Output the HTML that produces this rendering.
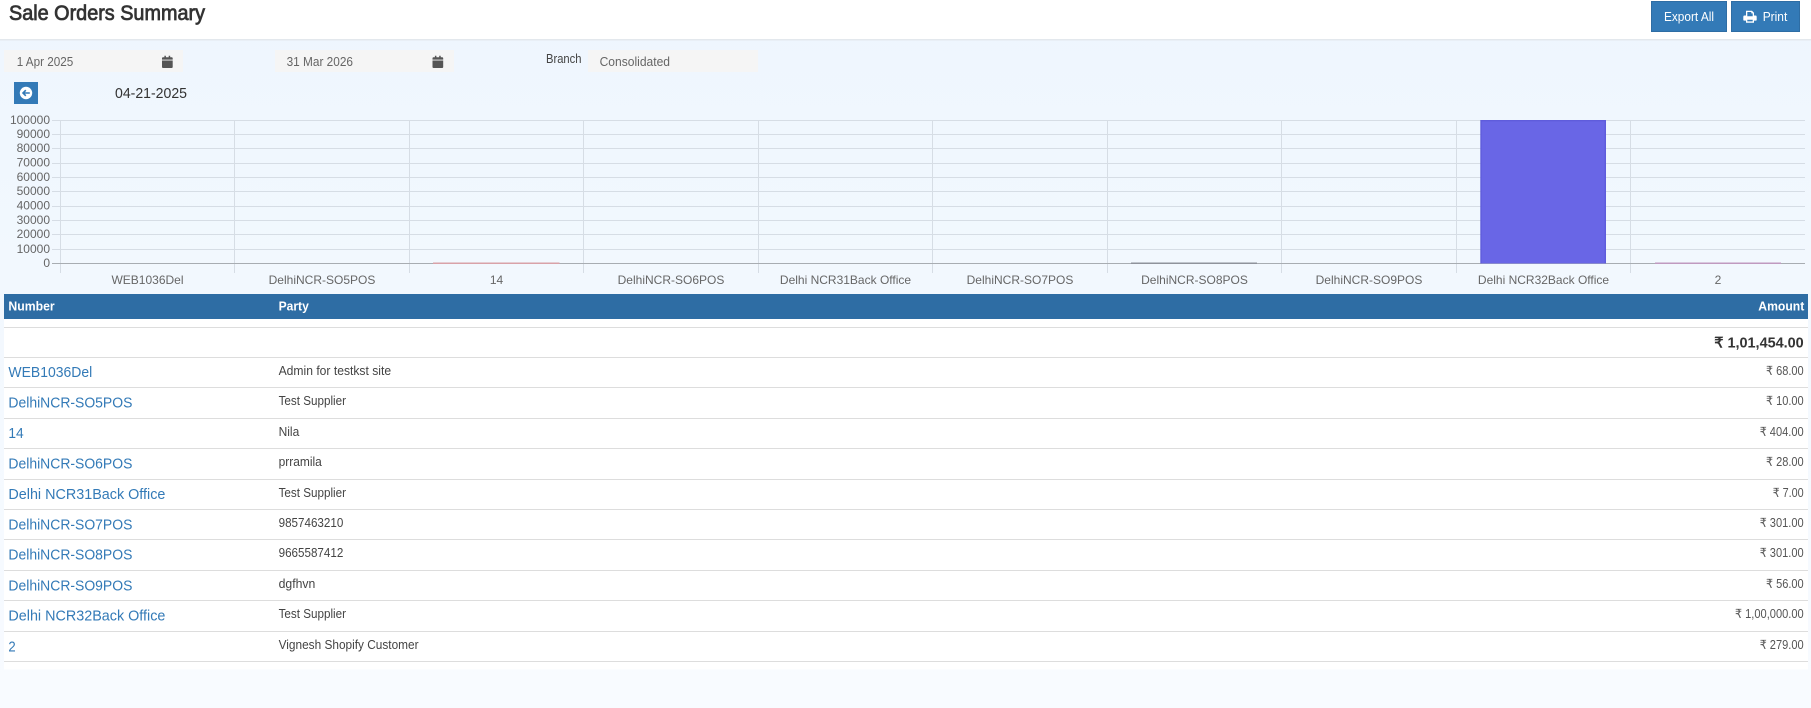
<!DOCTYPE html>
<html lang="en"><head><meta charset="utf-8"><title>Sale Orders Summary</title>
<style>
html,body{margin:0;padding:0;width:1811px;height:708px;overflow:hidden;background:#fff}
svg{display:block;position:absolute;left:0;top:0}
text{font-family:"Liberation Sans",Arial,sans-serif;white-space:pre}
.y{font-size:12px;fill:#666;text-anchor:end}
.x{font-size:12px;fill:#666;text-anchor:middle}
.l{font-size:15px;fill:#337ab7;transform:translateY(-.5px)}
.p{font-size:12.5px;fill:#444}
.a{font-size:12.5px;fill:#555}
.h{font-size:12.5px;fill:#fff;font-weight:bold}
.i{font-size:12.5px;fill:#666}
.b{font-size:12.5px;fill:#fff}
</style></head><body>
<svg width="1811" height="708" viewBox="0 0 1811 708" xmlns="http://www.w3.org/2000/svg">
<defs><linearGradient id="bg" x1="0" y1="0" x2="0" y2="1"><stop offset="0" stop-color="#eef6fe"/><stop offset="1" stop-color="#f8fbff"/></linearGradient></defs>
<rect x="0" y="0" width="1811" height="708" fill="url(#bg)"/>
<rect x="0" y="0" width="1811" height="39" fill="#fff"/>
<rect x="0" y="39" width="1811" height="1.5" fill="#e3e8ed"/>
<text x="9" y="20" font-size="21" fill="#333" stroke="#333" stroke-width=".75" textLength="196" lengthAdjust="spacingAndGlyphs">Sale Orders Summary</text>

<rect x="1651.5" y="1.5" width="75" height="30" fill="#337ab7" stroke="#2e6da4"/>
<text class="b" x="1664" y="21" textLength="50" lengthAdjust="spacingAndGlyphs">Export All</text>
<rect x="1731.5" y="1.5" width="68" height="30" fill="#337ab7" stroke="#2e6da4"/>
<path fill="#fff" fill-rule="evenodd" d="M1746 10.7h6l2 2v2.8h1.5a1.2 1.2 0 0 1 1.2 1.2v3.2a.7.7 0 0 1-.7.7h-2v2.1h-8v-2.1h-2a.7.7 0 0 1-.7-.7v-3.2a1.2 1.2 0 0 1 1.2-1.2h1.5zM1747.3 12v4.2h5.4v-2.8h-1.4V12zM1747.3 19.7v1.7h5.4v-1.7z"/>
<text class="b" x="1762.7" y="21" textLength="24.6" lengthAdjust="spacingAndGlyphs">Print</text>

<rect x="4" y="50" width="179" height="22" fill="#f5f5f5"/>
<text class="i" x="16.7" y="66" textLength="56.6" lengthAdjust="spacingAndGlyphs">1 Apr 2025</text>
<path fill="#555" d="M162 60.5h10.7v6.5a1 1 0 0 1-1 1H163a1 1 0 0 1-1-1zM163 57.2h1.4v-1.5h1.5v1.5h2.8v-1.5h1.5v1.5h1.5a1 1 0 0 1 1 1v1.4H162v-1.4a1 1 0 0 1 1-1z"/>
<rect x="275" y="50" width="179" height="22" fill="#f5f5f5"/>
<text class="i" x="286.6" y="66" textLength="66.4" lengthAdjust="spacingAndGlyphs">31 Mar 2026</text>
<path fill="#555" d="M432.5 60.5h10.7v6.5a1 1 0 0 1-1 1h-8.7a1 1 0 0 1-1-1zM433.5 57.2h1.4v-1.5h1.5v1.5h2.8v-1.5h1.5v1.5h1.5a1 1 0 0 1 1 1v1.4h-10.7v-1.4a1 1 0 0 1 1-1z"/>
<text class="p" x="546" y="63" textLength="35.5" lengthAdjust="spacingAndGlyphs">Branch</text>
<rect x="588" y="50" width="170" height="22" fill="#f5f5f5"/>
<text class="i" x="599.6" y="66" textLength="70.4" lengthAdjust="spacingAndGlyphs">Consolidated</text>

<rect x="14" y="82" width="24" height="22" fill="#337ab7"/>
<circle cx="26" cy="93" r="6.2" fill="#fff"/>
<path d="M29.8 93h-6.6M25.8 90.2L23 93l2.8 2.8" fill="none" stroke="#337ab7" stroke-width="1.6"/>
<text x="115" y="98" font-size="15" fill="#333" textLength="72" lengthAdjust="spacingAndGlyphs">04-21-2025</text>

<g stroke="#d6dde5" stroke-width="1" fill="none" shape-rendering="crispEdges">
<path d="M52 120.5H1805M52 134.5H1805M52 148.5H1805M52 163.5H1805M52 177.5H1805M52 191.5H1805M52 206.5H1805M52 220.5H1805M52 234.5H1805M52 249.5H1805"/>
<path d="M60.5 120V273M234.5 120V273M409.5 120V273M583.5 120V273M758.5 120V273M932.5 120V273M1107.5 120V273M1281.5 120V273M1456.5 120V273M1630.5 120V273"/>
</g>
<rect x="52" y="263" width="1753" height="1" fill="#a8adb2"/>
<rect x="433" y="262.5" width="126.5" height="1.5" fill="#d9a2a8"/>
<rect x="1131" y="262.5" width="126" height="1.5" fill="#8f939b"/>
<rect x="1655" y="262.5" width="126" height="1.5" fill="#c09ac0"/>
<rect x="1480.5" y="120" width="125.5" height="143.5" fill="#6966e6"/>
<path d="M1481 263.5V120.7H1605.3V263.5" fill="none" stroke="#5f5cdc" stroke-width="1.4"/>

<text class="y" x="50" y="124">100000</text>
<text class="y" x="50" y="138">90000</text>
<text class="y" x="50" y="152">80000</text>
<text class="y" x="50" y="166.5">70000</text>
<text class="y" x="50" y="181">60000</text>
<text class="y" x="50" y="195">50000</text>
<text class="y" x="50" y="209.5">40000</text>
<text class="y" x="50" y="224">30000</text>
<text class="y" x="50" y="238">20000</text>
<text class="y" x="50" y="253">10000</text>
<text class="y" x="50" y="267">0</text>

<text class="x" x="147.5" y="284">WEB1036Del</text>
<text class="x" x="322" y="284">DelhiNCR-SO5POS</text>
<text class="x" x="496.5" y="284">14</text>
<text class="x" x="671" y="284">DelhiNCR-SO6POS</text>
<text class="x" x="845.5" y="284">Delhi NCR31Back Office</text>
<text class="x" x="1020" y="284">DelhiNCR-SO7POS</text>
<text class="x" x="1194.5" y="284">DelhiNCR-SO8POS</text>
<text class="x" x="1369" y="284">DelhiNCR-SO9POS</text>
<text class="x" x="1543.5" y="284">Delhi NCR32Back Office</text>
<text class="x" x="1718" y="284">2</text>

<rect x="4" y="294" width="1804" height="25" fill="#2e6da4"/>
<text class="h" x="8.4" y="310.5" textLength="46.3" lengthAdjust="spacingAndGlyphs">Number</text>
<text class="h" x="278.6" y="310.5" textLength="30.2" lengthAdjust="spacingAndGlyphs">Party</text>
<text class="h" x="1758.3" y="310.5" textLength="46" lengthAdjust="spacingAndGlyphs">Amount</text>

<rect x="4" y="319" width="1804" height="350.5" fill="#fff"/>
<g fill="#ddd" shape-rendering="crispEdges">
<rect x="4" y="327" width="1804" height="1"/><rect x="4" y="357" width="1804" height="1"/><rect x="4" y="387" width="1804" height="1"/><rect x="4" y="418" width="1804" height="1"/><rect x="4" y="448" width="1804" height="1"/><rect x="4" y="479" width="1804" height="1"/><rect x="4" y="509" width="1804" height="1"/><rect x="4" y="539" width="1804" height="1"/><rect x="4" y="570" width="1804" height="1"/><rect x="4" y="600" width="1804" height="1"/><rect x="4" y="631" width="1804" height="1"/><rect x="4" y="661" width="1804" height="1"/>
</g>
<text x="1714.3" y="347.5" font-size="14.5" font-weight="bold" fill="#333" textLength="89.4" lengthAdjust="spacingAndGlyphs">₹ 1,01,454.00</text>

<text class="l" x="8.4" y="377.5" textLength="83.8" lengthAdjust="spacingAndGlyphs">WEB1036Del</text>
<text class="p" x="278.6" y="375" textLength="112.5" lengthAdjust="spacingAndGlyphs">Admin for testkst site</text>
<text class="a" x="1766" y="375" textLength="37.7" lengthAdjust="spacingAndGlyphs">₹ 68.00</text>

<text class="l" x="8.4" y="408" textLength="124" lengthAdjust="spacingAndGlyphs">DelhiNCR-SO5POS</text>
<text class="p" x="278.6" y="405" textLength="67.4" lengthAdjust="spacingAndGlyphs">Test Supplier</text>
<text class="a" x="1766" y="405" textLength="37.7" lengthAdjust="spacingAndGlyphs">₹ 10.00</text>

<text class="l" x="8.4" y="438.5" textLength="15.3" lengthAdjust="spacingAndGlyphs">14</text>
<text class="p" x="278.6" y="436" textLength="20.7" lengthAdjust="spacingAndGlyphs">Nila</text>
<text class="a" x="1759.7" y="436" textLength="44" lengthAdjust="spacingAndGlyphs">₹ 404.00</text>

<text class="l" x="8.4" y="469" textLength="124" lengthAdjust="spacingAndGlyphs">DelhiNCR-SO6POS</text>
<text class="p" x="278.6" y="466" textLength="43.2" lengthAdjust="spacingAndGlyphs">prramila</text>
<text class="a" x="1766" y="466" textLength="37.7" lengthAdjust="spacingAndGlyphs">₹ 28.00</text>

<text class="l" x="8.4" y="499.5" textLength="157" lengthAdjust="spacingAndGlyphs">Delhi NCR31Back Office</text>
<text class="p" x="278.6" y="497" textLength="67.4" lengthAdjust="spacingAndGlyphs">Test Supplier</text>
<text class="a" x="1772.7" y="497" textLength="31" lengthAdjust="spacingAndGlyphs">₹ 7.00</text>

<text class="l" x="8.4" y="530" textLength="124" lengthAdjust="spacingAndGlyphs">DelhiNCR-SO7POS</text>
<text class="p" x="278.6" y="527" textLength="64.7" lengthAdjust="spacingAndGlyphs">9857463210</text>
<text class="a" x="1759.7" y="527" textLength="44" lengthAdjust="spacingAndGlyphs">₹ 301.00</text>

<text class="l" x="8.4" y="560" textLength="124" lengthAdjust="spacingAndGlyphs">DelhiNCR-SO8POS</text>
<text class="p" x="278.6" y="557" textLength="64.7" lengthAdjust="spacingAndGlyphs">9665587412</text>
<text class="a" x="1759.7" y="557" textLength="44" lengthAdjust="spacingAndGlyphs">₹ 301.00</text>

<text class="l" x="8.4" y="591" textLength="124" lengthAdjust="spacingAndGlyphs">DelhiNCR-SO9POS</text>
<text class="p" x="278.6" y="588" textLength="36.7" lengthAdjust="spacingAndGlyphs">dgfhvn</text>
<text class="a" x="1766" y="588" textLength="37.7" lengthAdjust="spacingAndGlyphs">₹ 56.00</text>

<text class="l" x="8.4" y="621" textLength="157" lengthAdjust="spacingAndGlyphs">Delhi NCR32Back Office</text>
<text class="p" x="278.6" y="618" textLength="67.4" lengthAdjust="spacingAndGlyphs">Test Supplier</text>
<text class="a" x="1735" y="618" textLength="68.7" lengthAdjust="spacingAndGlyphs">₹ 1,00,000.00</text>

<text class="l" x="8.4" y="652" textLength="7.3" lengthAdjust="spacingAndGlyphs">2</text>
<text class="p" x="278.6" y="649" textLength="140" lengthAdjust="spacingAndGlyphs">Vignesh Shopify Customer</text>
<text class="a" x="1759.7" y="649" textLength="44" lengthAdjust="spacingAndGlyphs">₹ 279.00</text>
</svg>
</body></html>
